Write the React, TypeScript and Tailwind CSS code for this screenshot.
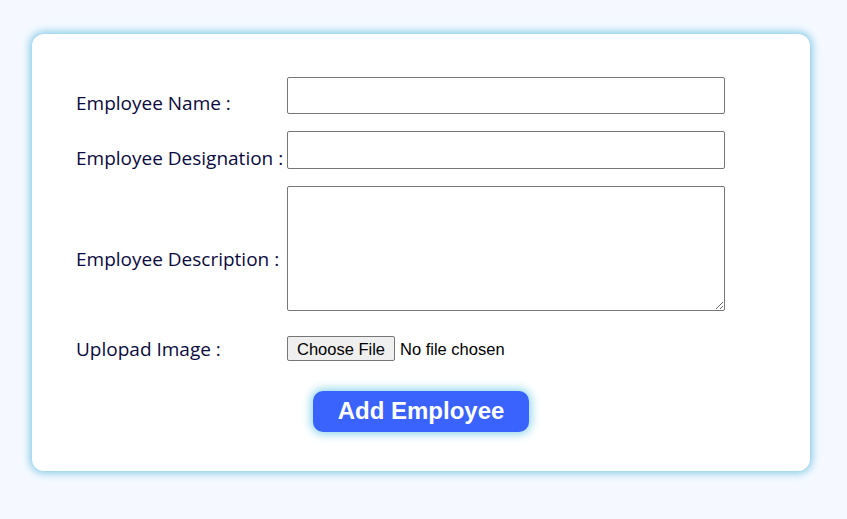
import React from 'react';

const labelCls = "w-[211px] shrink-0 text-[19px] text-[#0a0a40] leading-[24px]";

export default function App() {
  return (
    <div className="min-h-[519px] w-full bg-[#f5f9ff] pt-[34px] pl-[32px]" style={{ fontFamily: '"Open Sans", "Noto Sans", sans-serif' }}>
      <div className="w-[778px] h-[437px] bg-white rounded-[12px] shadow-[0_0_9px_2px_#80c8e5] pl-[44px] pt-[43px]">
        {/* Name */}
        <div className="flex items-center">
          <label className={labelCls}>Employee Name :</label>
          <div className="pb-[15px]">
            <input type="text" className="block w-[438px] h-[37px] border border-[#767676] rounded-[2px] bg-white" />
          </div>
        </div>
        {/* Designation */}
        <div className="flex items-center mt-[2px]">
          <label className={labelCls}>Employee Designation :</label>
          <div className="pb-[16px]">
            <input type="text" className="block w-[438px] h-[38px] border border-[#767676] rounded-[2px] bg-white" />
          </div>
        </div>
        {/* Description */}
        <div className="flex items-center mt-[1px]">
          <label className={labelCls}>Employee Description :</label>
          <div className="pb-[21px]">
            <textarea className="block w-[438px] h-[125px] border border-[#767676] rounded-[2px] bg-white resize" />
          </div>
        </div>
        {/* Upload */}
        <div className="flex items-center mt-[4px]">
          <label className={labelCls}>Uplopad Image :</label>
          <input
            type="file"
            className="text-[16.5px] text-black file:h-[25px] file:w-[108px] file:mr-[5px] file:border file:border-[#767676] file:rounded-[2px] file:bg-[#efefef] file:text-black file:text-[16.5px]"
            style={{ fontFamily: '"Liberation Sans", Arial, sans-serif' }}
          />
        </div>
        <div className="flex justify-center mt-[29px] mr-[44px]">
          <button className="w-[216px] h-[41px] rounded-[10px] bg-[#3a63fe] text-white text-[24px] font-bold leading-none shadow-[0_0_10px_2px_#8ad4ea]" style={{ fontFamily: '"Liberation Sans", Arial, sans-serif' }}>
            Add Employee
          </button>
        </div>
      </div>
    </div>
  );
}
